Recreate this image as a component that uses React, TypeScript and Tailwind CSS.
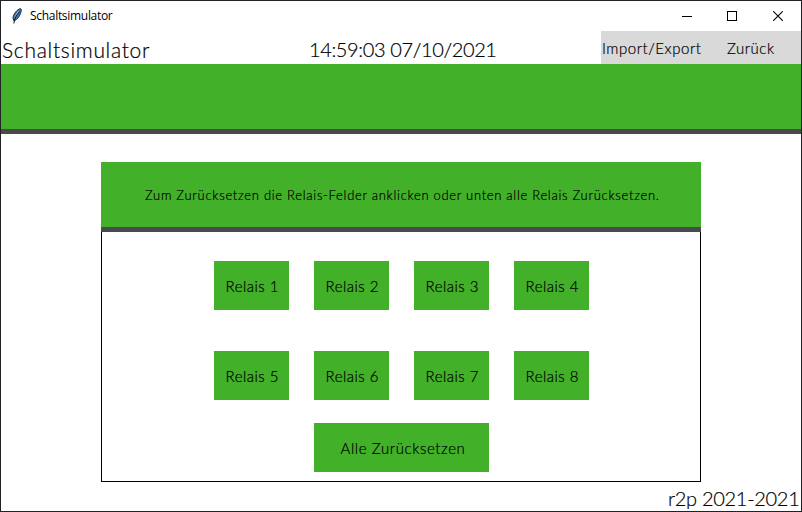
import React from "react";

const relays = [1, 2, 3, 4, 5, 6, 7, 8];

function Feather() {
  return (
    <svg width="12" height="16" viewBox="0 0 12 16" className="shrink-0">
      <path d="M9.5 0.6C6 1.4 2.2 6 2 10.4L3 13C6.5 11.5 10 7 10.3 1.6Z" fill="#3f73b5" stroke="#111820" strokeWidth="0.9" />
      <path d="M8.6 1.8C6.2 3.5 4.2 6.8 3.6 9.8L6 7.2Z" fill="#8fbdec" />
      <path d="M8.4 3.5C6 6.5 3.6 10 2.8 15.5" fill="none" stroke="#10151c" strokeWidth="1" />
    </svg>
  );
}

function TitleBar() {
  return (
    <header className="flex h-[30px] shrink-0 items-center pl-[10px] font-['Open_Sans',sans-serif] text-[12px] font-normal text-black [-webkit-text-stroke:0px]">
      <Feather />
      <span className="ml-[7px] tracking-[-0.3px] whitespace-nowrap">Schaltsimulator</span>
      <div className="ml-auto flex pr-[18px]">
        <svg width="10" height="11" shapeRendering="crispEdges"><path d="M0 5.5H10" stroke="black" /></svg>
        <svg width="10" height="11" className="ml-[35px]" shapeRendering="crispEdges"><path d="M0.5 0.5H9.5V9.5H0.5Z" fill="none" stroke="black" /></svg>
        <svg width="10" height="11" className="ml-[36px]"><path d="M0.2 0.2L9.8 9.8M9.8 0.2L0.2 9.8" stroke="black" strokeWidth="1.05" /></svg>
      </div>
    </header>
  );
}

export default function App() {
  return (
    <div className="flex h-[512px] w-[802px] flex-col border border-[#222226] bg-white font-['Lato',sans-serif] font-light text-black [-webkit-text-stroke:0.2px_black]">
      <TitleBar />
      <div className="flex h-[33px] shrink-0 whitespace-nowrap">
        <div className="w-[308px] pl-px pt-[4px] text-[21px] leading-[30px]"><span className="tracking-[0.7px]">Schaltsimulator</span></div>
        <div className="w-[292px] pt-[3px] text-[20px] leading-[30px]"><span className="tracking-[-0.38px]">14:59:03 07/10/2021</span></div>
        <nav className="flex w-[200px] bg-[#d9d9d9] text-[15px] leading-[35px]">
          <button className="w-[125px] pl-px text-left"><span className="tracking-[0.55px]">Import/Export</span></button>
          <button className="pl-px text-left"><span className="tracking-[0.5px]">Zurück</span></button>
        </nav>
      </div>
      <div className="h-[70px] shrink-0 border-b-[5px] border-[#4a494d] bg-[#43b02a]" />
      <main className="mx-auto mt-[28px] flex h-[320px] w-[600px] shrink-0 flex-col">
        <div className="h-[70px] shrink-0 whitespace-nowrap border-b-[5px] border-[#4a494d] bg-[#43b02a] pl-[44px] text-[13px] leading-[67px]">
          <span className="tracking-[0.7px]">Zum Zurücksetzen die Relais-Felder anklicken oder unten alle Relais Zurücksetzen.</span>
        </div>
        <div className="flex h-[250px] flex-col items-center border border-t-0 border-black pt-[29px]">
          <div className="grid grid-cols-4 gap-x-[25px] gap-y-[41px]">
            {relays.map((n) => (
              <button key={n} className="h-[49px] w-[75px] whitespace-nowrap bg-[#43b02a] pl-[12px] pt-[2px] text-left text-[15px]">
                <span className="tracking-[0.5px]">Relais {n}</span>
              </button>
            ))}
          </div>
          <button className="mt-[23px] h-[49px] w-[175px] bg-[#43b02a] pl-[27px] pt-[2px] text-left text-[15px]">
            <span className="tracking-[0.6px]">Alle Zurücksetzen</span>
          </button>
        </div>
      </main>
      <footer className="flex h-[29px] shrink-0 pl-[667px] text-[20px] leading-[33px] whitespace-nowrap">
        <span className="tracking-[-0.3px]">r2p 2021-2021</span>
      </footer>
    </div>
  );
}
